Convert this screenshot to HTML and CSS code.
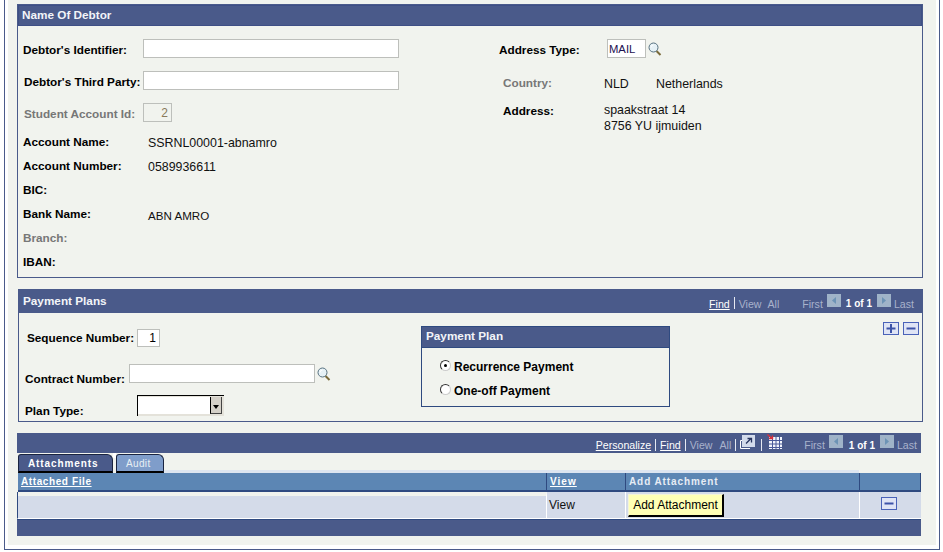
FILE: index.html
```html
<!DOCTYPE html>
<html lang="en">
<head>
  <meta charset="UTF-8" />
  <title>Payment Plans</title>
  <link rel="stylesheet" href="styles.css">
</head>
<body>
  <svg class="defs" width="0" height="0">
    <symbol id="glass" viewBox="0 0 14 14">
      <path d="M8.5 9 L12.5 13" stroke="#7a6a3a" stroke-width="2" fill="none"/>
      <circle cx="5.5" cy="5.5" r="4.5" fill="#e6f1f6" stroke="#56707f" stroke-width="1"/>
      <path d="M3 5.5 A2.5 2.5 0 0 1 5.5 3" stroke="#fff" fill="none"/>
    </symbol>
  </svg>

  <div class="shell">
    <div class="page">

      <!-- Name Of Debtor -->
      <div class="panel debtor">
        <div class="bar"><span class="bar-title">Name Of Debtor</span></div>
        <div class="debtor-body">
          <div class="debtor-left">
            <div class="field first">
              <label class="lbl w120">Debtor's Identifier:</label>
              <input class="txt w256" type="text">
            </div>
            <div class="field gap13">
              <label class="lbl w119 nudge1">Debtor's Third Party:</label>
              <input class="txt w256" type="text">
            </div>
            <div class="field gap13">
              <label class="lbl grey w119 nudge1">Student Account Id:</label>
              <input class="txt w29 num dim" type="text" value="2">
            </div>
            <div class="rows">
              <div class="row"><span class="lbl w125">Account Name:</span><span class="val">SSRNL00001-abnamro</span></div>
              <div class="row"><span class="lbl w125">Account Number:</span><span class="val">0589936611</span></div>
              <div class="row"><span class="lbl w125">BIC:</span></div>
              <div class="row"><span class="lbl w125">Bank Name:</span><span class="val tight">ABN AMRO</span></div>
              <div class="row"><span class="lbl grey w125">Branch:</span></div>
              <div class="row"><span class="lbl w125">IBAN:</span></div>
            </div>
          </div>
          <div class="debtor-right">
            <div class="field first">
              <label class="lbl w108">Address Type:</label>
              <input class="txt w39 code" type="text" value="MAIL">
              <svg class="glass"><use href="#glass"/></svg>
            </div>
            <div class="addr-row country">
              <span class="lbl grey w101">Country:</span>
              <span class="val w52">NLD</span>
              <span class="val">Netherlands</span>
            </div>
            <div class="addr-row address">
              <span class="lbl w101">Address:</span>
              <span class="val lines">spaakstraat 14<br>8756 YU ijmuiden</span>
            </div>
          </div>
        </div>
      </div>

      <!-- Payment Plans -->
      <div class="panel plans">
        <div class="bar tall">
          <span class="bar-title">Payment Plans</span>
          <div class="nav">
            <a class="nav-link">Find</a><i class="pipe"></i>
            <span class="nav-off">View</span><span class="nav-off all">All</span>
            <span class="nav-off first-lbl">First</span>
            <span class="pager"><svg width="14" height="13"><path d="M9 3 V10 L5 6.5Z" fill="#6d93b5"/></svg></span>
            <b class="count">1 of 1</b>
            <span class="pager next"><svg width="14" height="13"><path d="M5 3 V10 L9 6.5Z" fill="#6d93b5"/></svg></span>
            <span class="nav-off last-lbl">Last</span>
          </div>
        </div>
        <div class="plans-body">
          <div class="plan-fields">
            <div class="field seq">
              <label class="lbl w110">Sequence Number:</label>
              <input class="txt w23 num" type="text" value="1">
            </div>
            <div class="field contract">
              <label class="lbl w104 low">Contract Number:</label>
              <input class="txt w186" type="text">
              <svg class="glass"><use href="#glass"/></svg>
            </div>
            <div class="field plan-type">
              <label class="lbl w112 low">Plan Type:</label>
              <span class="dropdown"><span class="drop-box"></span><span class="drop-btn"></span></span>
            </div>
          </div>
          <div class="subpanel">
            <div class="sub-bar">Payment Plan</div>
            <label class="radio r1"><span class="dot on"></span>Recurrence Payment</label>
            <label class="radio r2"><span class="dot"></span>One-off Payment</label>
          </div>
          <div class="actions">
            <span class="sq"><svg width="14" height="11"><path d="M7 1V10M2.500 5.500H11.500" stroke="#3d53a8" stroke-width="2"/></svg></span>
            <span class="sq"><svg width="14" height="11"><path d="M2.500 5.500H11.500" stroke="#3d53a8" stroke-width="2"/></svg></span>
          </div>
        </div>
      </div>

      <!-- Attachments grid -->
      <div class="grid-wrap">
        <div class="grid-bar">
          <a class="nav-link">Personalize</a><i class="pipe"></i>
          <a class="nav-link">Find</a><i class="pipe"></i>
          <span class="nav-off">View</span><span class="nav-off all wider">All</span><i class="pipe"></i>
          <svg class="zoom-ico" width="15" height="14">
            <path d="M0.500 13.500V5.500H3M0.500 13.500H10" stroke="#fff" fill="none"/>
            <rect x="2" y="0" width="13" height="12" fill="#d3dbeb"/>
            <path d="M6 8.500 L11 3.500 M7.500 3.500 H11.500 V7.500" stroke="#27345f" stroke-width="1.300" fill="none"/>
          </svg>
          <i class="pipe wide"></i>
          <svg class="table-ico" width="15" height="15">
            <rect x="2" y="3" width="13" height="12" fill="#f2f4fb"/>
            <path d="M5.500 3V15M9 3V15M12.500 3V15M2 6.500H15M2 10H15M2 13.500H15" stroke="#4a5a9a" stroke-width="1"/>
            <path d="M0.500 0.500 L5 4.500 M2 4.500 H5.500 V1.500" stroke="#d8303a" stroke-width="1.400" fill="none"/>
          </svg>
          <span class="nav-off first-lbl">First</span>
          <span class="pager"><svg width="14" height="13"><path d="M9 3 V10 L5 6.500Z" fill="#6d93b5"/></svg></span>
          <b class="count">1 of 1</b>
          <span class="pager next"><svg width="14" height="13"><path d="M5 3 V10 L9 6.500Z" fill="#6d93b5"/></svg></span>
          <span class="nav-off last-lbl">Last</span>
        </div>
        <div class="tabs">
          <span class="tab active">Attachments</span>
          <span class="tab-notch"></span>
          <span class="tab">Audit</span>
          <span class="tab-fill"></span>
        </div>
        <div class="thead">
          <a class="th link narrow">Attached File</a>
          <a class="th link">View</a>
          <span class="th add">Add Attachment</span>
          <span class="th"></span>
        </div>
        <div class="tbody">
          <div class="td file"></div>
          <div class="td">View</div>
          <div class="td"><button class="btn" type="button">Add Attachment</button></div>
          <div class="td center">
            <span class="sq"><svg width="14" height="11"><path d="M2.500 5.500H11.500" stroke="#3d53a8" stroke-width="2"/></svg></span>
          </div>
        </div>
        <div class="grid-foot"></div>
      </div>

    </div>
  </div>
</body>
</html>
```

FILE: styles.css
```css
/* Reset & Body */
body {
  margin: 0;
  background: #fff;
  font-family: "Liberation Sans", Arial, sans-serif;
  font-size: 12px;
  color: #000;
}

.defs {
  display: block;
  height: 0;
}

/* Outer frame */
.shell {
  width: 936px;
  height: 550px;
  box-sizing: border-box;
  margin-left: 4px;
  padding: 0 3px 4px;
  border: 1px solid #4a5a8a;
  border-top: none;
}

.page {
  height: 545px;
  box-sizing: border-box;
  padding: 4px 13px 0 9px;
  background: #f1f3ee;
}

/* Panels */
.panel {
  box-sizing: border-box;
  border: 1px solid #4a5a8a;
}

.bar {
  display: flex;
  align-items: center;
  justify-content: space-between;
  height: 21px;
  box-sizing: border-box;
  padding-left: 3px;
  background: #4a5a8a;
  border: 1px solid #3e4f85;
}

.bar.tall {
  height: 23px;
  border: none;
  padding-left: 4px;
}

.bar-title {
  padding-bottom: 2px;
  font-size: 11.75px;
  font-weight: bold;
  color: #f2f4f8;
}

/* Name Of Debtor */
.debtor {
  height: 274px;
}

.debtor-body {
  display: flex;
}

.debtor-left {
  width: 481px;
  flex: none;
  padding-left: 5px;
  box-sizing: border-box;
}

.field {
  display: flex;
  align-items: center;
}

.field.first {
  margin-top: 13px;
}

.field.gap13 {
  margin-top: 13px;
}

.lbl {
  font-size: 11.75px;
  font-weight: bold;
  flex: none;
  white-space: nowrap;
}

.debtor .field .lbl {
  padding-top: 2px;
}

.row .lbl {
  padding-bottom: 2px;
}

.seq .lbl {
  padding-bottom: 2px;
}

.grey {
  color: #777;
}

.nudge1 {
  margin-left: 1px;
}

.w101 { width: 101px; }
.w104 { width: 104px; }
.w108 { width: 108px; }
.w110 { width: 110px; }
.w112 { width: 112px; }
.w119 { width: 119px; }
.w120 { width: 120px; }
.w125 { width: 125px; }
.w52 { width: 52px; }

/* Inputs */
.txt {
  box-sizing: border-box;
  height: 19px;
  margin: 0;
  padding: 0 3px;
  background: #fff;
  border: 1px solid #bdbfbb;
  border-radius: 0;
  font: 12px "Liberation Sans", Arial, sans-serif;
  color: #000;
  outline: none;
}

.w256 { width: 256px; }
.w186 { width: 186px; }
.w39 { width: 39px; }
.w29 { width: 29px; }
.w23 { width: 23px; }

.num {
  text-align: right;
}

.dim {
  background: #f1f3ee;
  color: #8a7a5a;
}

.code {
  padding: 0 1px;
  font-size: 11.25px;
  color: #1c1050;
}

.glass {
  width: 14px;
  height: 14px;
  margin-left: 2px;
  flex: none;
}

/* Read only rows */
.rows {
  margin-top: 8px;
}

.row {
  display: flex;
  align-items: center;
  height: 24px;
}

.val {
  font-size: 12.4px;
  color: #111;
  padding-top: 2px;
}

.val.tight {
  font-size: 11.6px;
}

.debtor-right {
  flex: 1;
}

.addr-row {
  display: flex;
  padding-left: 4px;
}

.addr-row .val {
  padding-top: 1px;
}

.country {
  margin-top: 18px;
}

.address {
  margin-top: 12px;
}

.address .lbl {
  padding-top: 1px;
}

.addr-row .lines {
  line-height: 15.5px;
  padding-top: 0;
}

/* Payment Plans */
.plans {
  height: 133px;
  margin: 11px 0 0 1px;
}

.nav,
.grid-bar {
  display: flex;
  align-items: center;
  font-size: 10.6px;
  color: #fff;
}

.nav {
  height: 23px;
  padding-right: 8px;
}

.nav-link {
  color: #fff;
  text-decoration: underline;
  padding-top: 4px;
}

.nav-off {
  color: #a9b2cc;
  padding-top: 4px;
}

.all {
  margin-left: 6px;
}

.all.wider {
  margin-left: 7px;
}

.pipe {
  width: 1px;
  height: 12px;
  margin: 3px 4px 0;
  background: #e6e9f2;
}

.pipe.wide {
  margin: 3px 5px 0 6px;
}

.first-lbl {
  margin-left: 23px;
}

.last-lbl {
  margin-left: 3px;
}

.pager {
  display: block;
  width: 14px;
  height: 13px;
  margin: -3px 0 0 4px;
  background: #9fb3c8;
}

.pager.next {
  margin-left: 5px;
}

.pager svg {
  display: block;
}

.count {
  font-size: 10px;
  margin-left: 5px;
  padding-top: 4px;
  color: #fff;
}

.grid-bar .count {
  margin-left: 6px;
}

.plans-body {
  display: flex;
}

.plan-fields {
  width: 402px;
  box-sizing: border-box;
  padding-left: 6px;
}

.seq {
  margin: 16px 0 0 2px;
}

.seq .txt {
  height: 18px;
}

.contract {
  margin-top: 17px;
}

.plan-type {
  margin-top: 12px;
}

.low {
  align-self: flex-end;
  margin-bottom: -2px;
}

.plan-type .low {
  margin-bottom: -1px;
}

/* Dropdown */
.dropdown {
  display: flex;
  width: 87px;
  height: 21px;
  box-sizing: border-box;
  padding: 1px 2px 2px 0;
  background: #e4e2da;
  border-top: 1px solid #000;
  border-left: 1px solid #000;
}

.drop-box {
  flex: 1;
  background: #fff;
}

.drop-btn {
  position: relative;
  width: 12px;
  background: #d4d0c8;
  border-left: 1px solid #000;
  border-right: 1px solid #444;
  border-bottom: 1px solid #444;
  box-sizing: border-box;
}

.drop-btn::after {
  content: "";
  position: absolute;
  left: 2px;
  top: 8px;
  border: 3px solid transparent;
  border-top: 4px solid #000;
  border-bottom: none;
}

/* Payment Plan box */
.subpanel {
  width: 249px;
  height: 81px;
  box-sizing: border-box;
  margin-top: 13px;
  border: 1px solid #2f4a80;
}

.sub-bar {
  height: 21px;
  box-sizing: border-box;
  padding: 2px 0 0 4px;
  background: #4a5a8a;
  border-bottom: 1px solid #2f4a80;
  font-size: 11.75px;
  font-weight: bold;
  color: #f2f4f8;
}

.radio {
  display: flex;
  align-items: center;
  padding-left: 18px;
  height: 16px;
  font-weight: bold;
  color: #000;
}

.r1 {
  margin-top: 11px;
}

.r2 {
  margin-top: 8px;
}

.dot {
  position: relative;
  top: -2px;
  width: 11px;
  height: 11px;
  margin-right: 3px;
  box-sizing: border-box;
  background: #fff;
  border: 1px solid #333;
  border-right-color: #ccc;
  border-bottom-color: #ccc;
  border-radius: 50%;
}

.dot.on::after {
  content: "";
  position: absolute;
  left: 3px;
  top: 3px;
  width: 3px;
  height: 3px;
  background: #000;
  border-radius: 50%;
}

.actions {
  display: flex;
  gap: 4px;
  margin: 9px 0 0 auto;
  padding-right: 3px;
}

.sq {
  display: block;
  width: 16px;
  height: 13px;
  box-sizing: border-box;
  background: #dfe4f5;
  border: 1px solid #4a62b8;
}

.sq svg {
  display: block;
  width: 14px;
  height: 11px;
}

/* Attachments grid */
.grid-wrap {
  width: 904px;
  margin-top: 11px;
}

.grid-bar {
  justify-content: flex-end;
  height: 20px;
  padding-right: 4px;
  background: #4a5a8a;
}

.zoom-ico {
  margin-top: -3px;
}

.table-ico {
  margin: -3px -1px 0 0;
}

.tabs {
  display: flex;
  align-items: flex-end;
  height: 20px;
  padding-left: 1px;
}

.tab {
  height: 19px;
  box-sizing: border-box;
  padding: 3px 0 0 9px;
  width: 48px;
  background: #7f9dca;
  border: 1px solid #1a2440;
  border-bottom: 2px solid #000;
  border-radius: 3px 6px 0 0;
  font-size: 10px;
  letter-spacing: 0.35px;
  color: #e8f0f4;
}

.tab.active {
  width: 95px;
  background: #4a5a8a;
  font-weight: bold;
  letter-spacing: 0.9px;
  color: #fff;
}

.tab-notch {
  align-self: flex-start;
  width: 3px;
  height: 5px;
  background: #fff;
}

.tab-fill {
  width: 695px;
  height: 3px;
  background: #dde5f0;
}

.thead,
.tbody {
  display: grid;
  grid-template-columns: 529px 79px 234px 61px;
  margin-left: 1px;
}

.thead {
  height: 19px;
  box-sizing: border-box;
  background: #5c86b4;
  border-bottom: 2px solid #2f4a80;
  border-right: 1px solid #2f4a80;
}

.th {
  box-sizing: border-box;
  padding: 3px 0 0 3px;
  font-size: 10px;
  font-weight: bold;
  letter-spacing: 1.05px;
  color: #e6ecf5;
  border-right: 1px solid #2f4a80;
}

.th:last-child {
  border-right: none;
}

.th.link {
  color: #fff;
  text-decoration: underline;
}

.th.narrow {
  letter-spacing: 0.6px;
}

.th.add {
  letter-spacing: 0.9px;
}

.tbody {
  height: 27px;
  box-sizing: border-box;
  background: #d4dbe9;
  border-left: 1px solid #2f4a80;
  margin-left: 0;
  border-bottom: 1px solid #fff;
}

.td {
  display: flex;
  align-items: center;
  box-sizing: border-box;
  padding-left: 2px;
  border-right: 1px solid #fff;
  color: #111;
}

.td:last-child {
  border-right: none;
}

.td.file {
  border-top: 4px solid #f1f3ee;
}

.td.center {
  justify-content: center;
  padding: 0 3px 3px 0;
}

.btn {
  width: 96px;
  height: 23px;
  padding: 0;
  background: #ffffb5;
  border: 1px solid;
  border-color: #f4f4d8 #000 #000 #f4f4d8;
  border-width: 1px 2px 2px 1px;
  font: 12px "Liberation Sans", Arial, sans-serif;
  color: #000;
}

.grid-foot {
  height: 17px;
  background: #4a5a8a;
  border-top: 1px solid #2f4a80;
  box-sizing: border-box;
}
```
